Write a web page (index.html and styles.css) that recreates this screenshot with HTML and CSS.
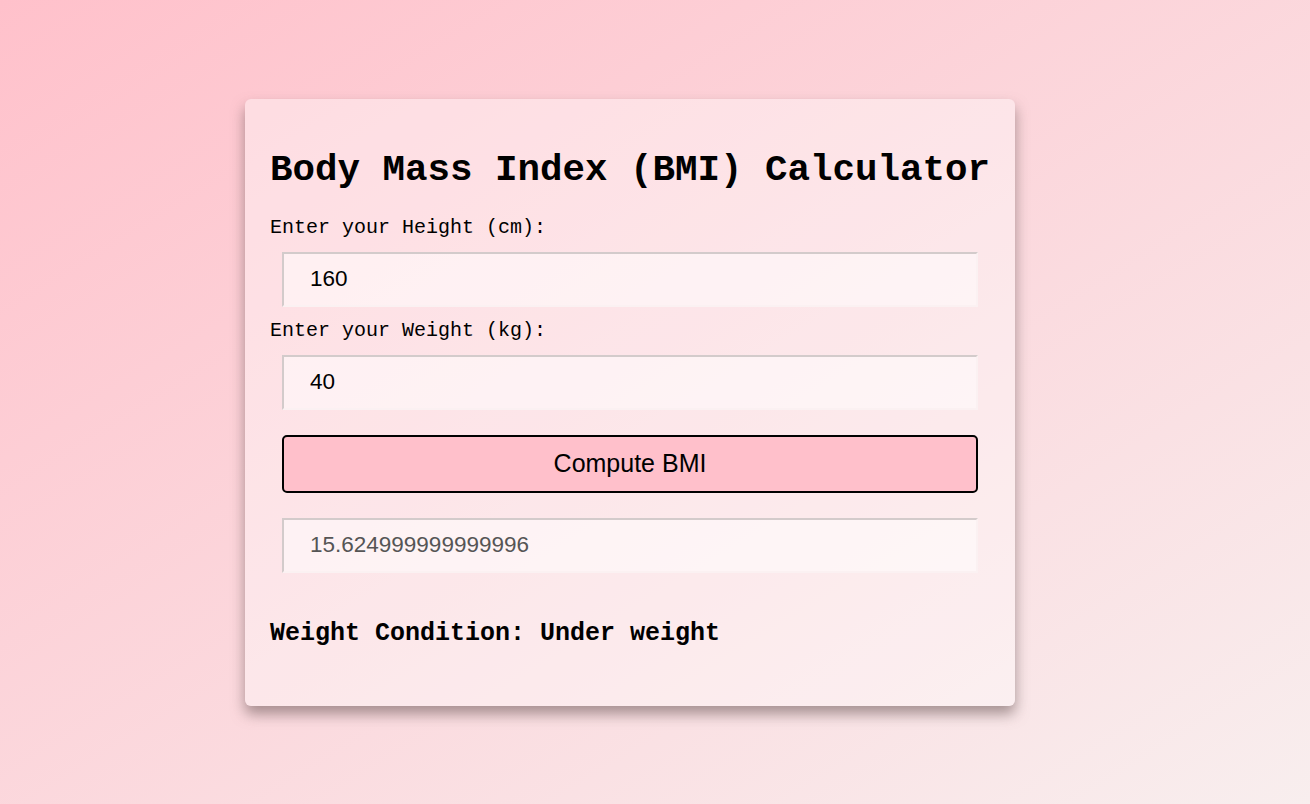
FILE: index.html
```html
<!DOCTYPE html>
<html lang="en">
<head>
<meta charset="utf-8">
<title>BMI Calculator</title>
<link rel="stylesheet" href="styles.css">
</head>
<body>
  <main class="card">
    <h1 class="title">Body Mass Index (BMI) Calculator</h1>
    <label class="label" for="height">Enter your Height (cm):</label>
    <input class="field" id="height" type="text" value="160">
    <label class="label" for="weight">Enter your Weight (kg):</label>
    <input class="field" id="weight" type="text" value="40">
    <button class="btn" type="button">Compute BMI</button>
    <input class="field result" type="text" value="15.624999999999996" readonly>
    <h3 class="condition">Weight Condition: Under weight</h3>
  </main>
</body>
</html>
```
FILE: styles.css
```css
html, body {
  margin: 0;
  padding: 0;
  height: 100%;
}
body {
  background: linear-gradient(to bottom right, #ffc1cb 0%, #f8eeee 100%);
  font-family: "Liberation Mono", "Courier New", monospace;
  display: flex;
  justify-content: center;
  align-items: flex-start;
  box-sizing: border-box;
}
.card {
  margin-top: 99px;
  margin-right: 50px;
  width: 770px;
  box-sizing: border-box;
  padding: 25px 25px 58px 25px;
  background: rgba(255, 255, 255, 0.38);
  border-radius: 6px;
  box-shadow: 0 8px 14px rgba(110, 90, 90, 0.6);
  display: flex;
  flex-direction: column;
  align-items: stretch;
}
.title {
  font-size: 37.5px;
  font-weight: bold;
  margin: 25px 0 25px 0;
  line-height: 42px;
  white-space: nowrap;
  color: #000;
}
.label {
  font-size: 20px;
  line-height: 23px;
  color: #000;
}
.field {
  margin: 12.5px 12px;
  height: 55px;
  box-sizing: border-box;
  padding: 0 26px;
  border-width: 2px;
  border-style: solid;
  border-top-color: #d3cbcb;
  border-left-color: #d3cbcb;
  border-right-color: #fbf1f2;
  border-bottom-color: #fbf1f2;
  background: rgba(255, 255, 255, 0.5);
  font-family: "Liberation Sans", Arial, sans-serif;
  font-size: 22.5px;
  color: #000;
  outline: none;
}
.btn {
  margin: 12.5px 12px;
  height: 58px;
  background: #ffc0cb;
  border: 2px solid #000;
  border-radius: 5px;
  font-family: "Liberation Sans", Arial, sans-serif;
  font-size: 25px;
  color: #000;
  cursor: pointer;
}
.result {
  color: #555;
}
.condition {
  margin: 35px 0 0 0;
  font-size: 25px;
  line-height: 28px;
  font-weight: bold;
  color: #000;
}
```
